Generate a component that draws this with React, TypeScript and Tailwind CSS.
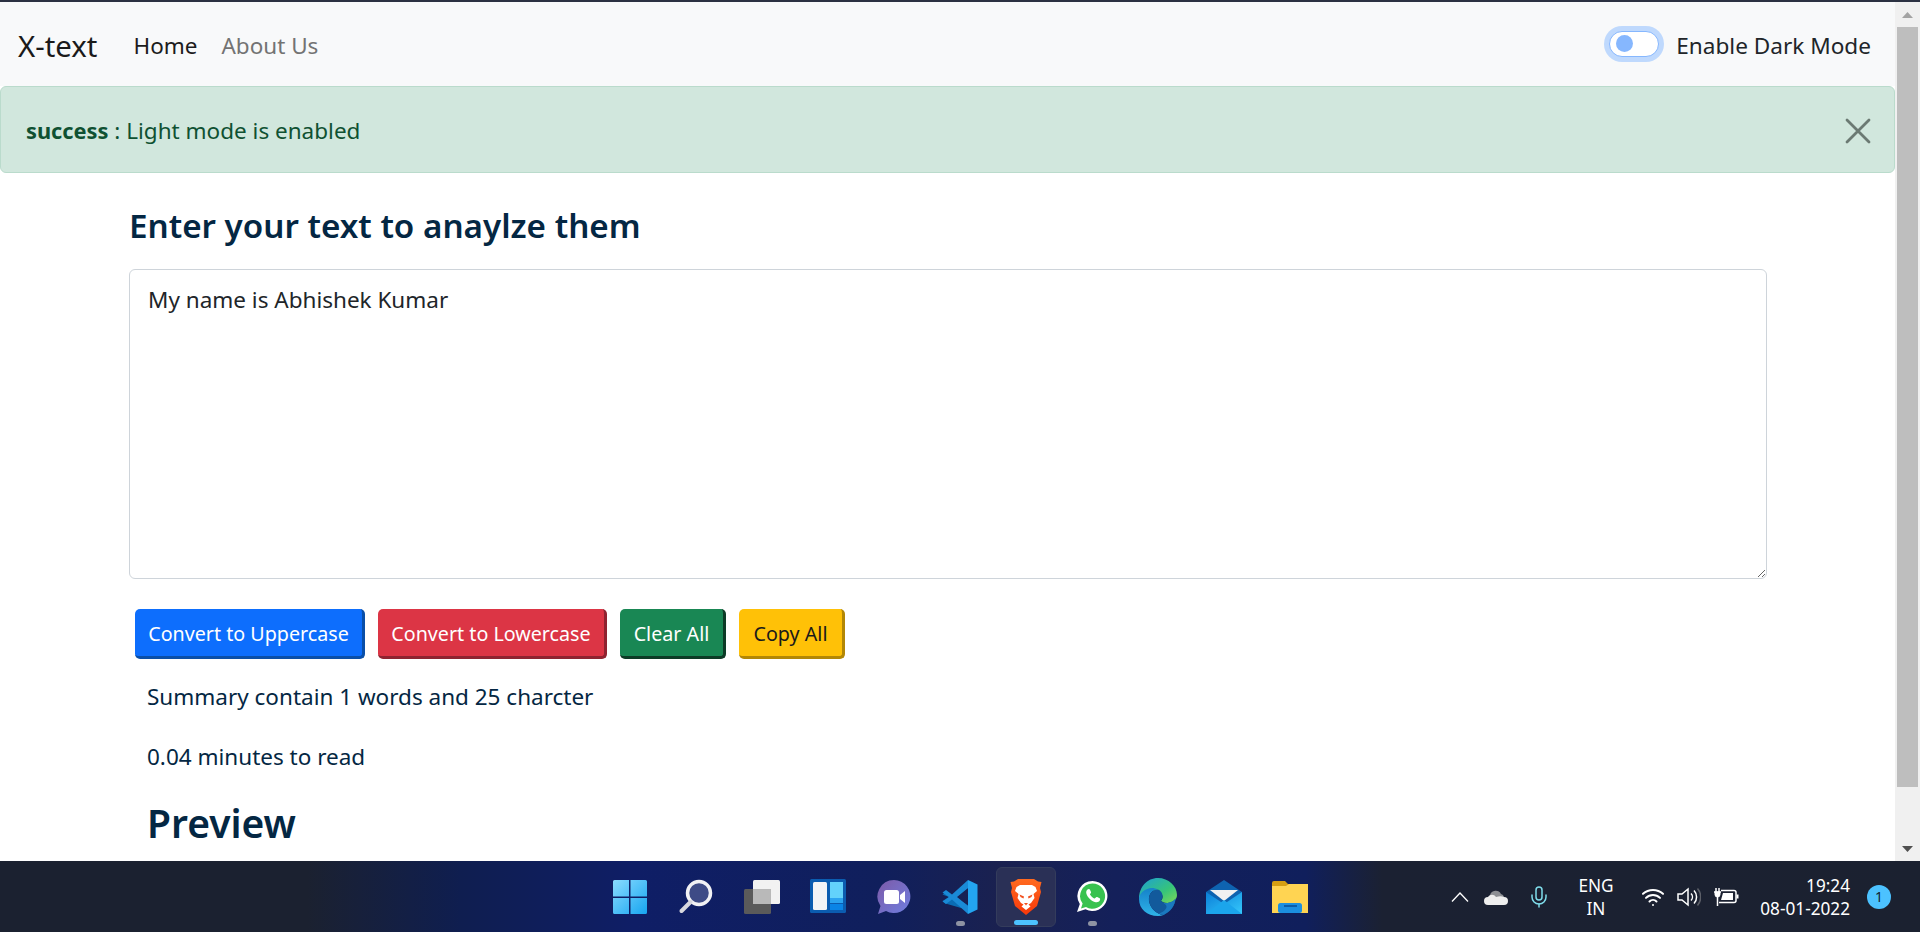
import { Mic, Wifi } from 'lucide-react'

const sans = "font-['Noto_Sans',sans-serif]"

function WindowsIcon() {
  return (
    <svg width="36" height="36" viewBox="0 0 36 36">
      <defs>
        <linearGradient id="win" x1="0" y1="0" x2="1" y2="1">
          <stop offset="0" stopColor="#8adcff" />
          <stop offset="1" stopColor="#17a5f0" />
        </linearGradient>
      </defs>
      <path d="M1 2.500A1.500 1.500 0 0 1 2.500 1H17v16.500H1zM18.500 1H33.500A1.500 1.500 0 0 1 35 2.500V17.500H18.500zM1 19H17V35H2.500A1.500 1.500 0 0 1 1 33.500zM18.500 19H35V33.500A1.500 1.500 0 0 1 33.500 35H18.500z" fill="url(#win)" />
    </svg>
  )
}

function SearchIcon() {
  return (
    <svg width="36" height="36" viewBox="0 0 36 36">
      <circle cx="21" cy="14" r="11.500" fill="#3e4b86" stroke="#f1f1f4" strokeWidth="3.500" />
      <path d="M12.500 23 3.500 32" stroke="#d8d8de" strokeWidth="4" strokeLinecap="round" />
    </svg>
  )
}

function TaskViewIcon() {
  return (
    <svg width="36" height="36" viewBox="0 0 36 36">
      <rect x="9" y="1" width="27" height="24" rx="1.500" fill="#f2f2f2" />
      <rect x="0" y="10" width="27" height="25" rx="1.500" fill="#5a5a5a" />
      <path d="M9 10h18v15H9z" fill="#b9b9b9" />
    </svg>
  )
}

function WidgetsIcon() {
  return (
    <svg width="36" height="36" viewBox="0 0 36 36">
      <rect width="36" height="34" rx="1.500" fill="#0b5cb0" />
      <rect x="3" y="3" width="14" height="28" rx="1.500" fill="#f3f4f6" />
      <path d="M20 3h13v16H20z" fill="#63d2fb" />
      <path d="M20 19h13v5H20z" fill="#2ba3f0" />
      <path d="M20 25h13v6H20z" fill="#0a84e6" />
    </svg>
  )
}

function TeamsIcon() {
  return (
    <svg width="34" height="36" viewBox="0 0 34 36">
      <defs>
        <linearGradient id="teams" x1="0" y1="0" x2="1" y2="1">
          <stop offset="0" stopColor="#7d5aa8" />
          <stop offset="1" stopColor="#6f7fe0" />
        </linearGradient>
      </defs>
      <path d="M17 1a16.500 16.500 0 1 1-8 31l-8 3 2.500-8A16.500 16.500 0 0 1 17 1z" fill="url(#teams)" />
      <rect x="7" y="11" width="15" height="14" rx="2.500" fill="#fff" />
      <path d="m23 16 5-4v12l-5-4z" fill="#fff" />
    </svg>
  )
}

function CodeIcon() {
  return (
    <svg width="36" height="36" viewBox="0 0 36 36">
      <path d="M26 5 10 18 3.500 13 .5 15.500 7 18 .5 22 3.500 24.500 26 31l1-4L13 18l13-9z" fill="#0a6cb4" />
      <path d="M26 1 10 15.500 4 11 .5 13.500 7 18 .5 22.500 4 25 10 20.500 26 35V27L15 18 26 9z" fill="#1a8ad6" />
      <path d="M26 1 35.500 5.500V30.500L26 35z" fill="#23a5f0" />
    </svg>
  )
}

function BraveIcon() {
  return (
    <svg width="32" height="36" viewBox="0 0 32 36">
      <defs>
        <linearGradient id="brave" x1="0" y1="0" x2="0" y2="1">
          <stop offset="0" stopColor="#ff6a1f" />
          <stop offset="1" stopColor="#f8380a" />
        </linearGradient>
      </defs>
      <path d="M8 0H24L28 2.500 31.500 3 30 9 31 13 27 27 16 36 5 27 1 13 2 9 .5 3 4 2.500z" fill="url(#brave)" />
      <path d="M10 6H22L25.500 8 27 12 23.500 15 24.500 19 21 24 18.500 25.500 20.500 27.500 16 31 11.500 27.500 13.500 25.500 11 24 7.500 19 8.500 15 5 12 6.500 8z" fill="#fff" />
      <path d="M9.500 15.500 14 17.500 13.500 19.500 10.500 18zM22.500 15.500 18 17.500 18.500 19.500 21.500 18z" fill="#f2501e" />
      <path d="M14 24H18L16 26.500z" fill="#f2501e" />
    </svg>
  )
}

function WhatsAppIcon() {
  return (
    <svg width="32" height="34" viewBox="0 0 32 34">
      <path d="M16.500 1a15 15 0 1 1-7 28.300L1 32l2.800-8A15 15 0 0 1 16.500 1z" fill="#fff" />
      <path d="M16.500 3.500a12.600 12.600 0 1 1-6.500 23.400l-5 1.500 1.600-4.800A12.600 12.600 0 0 1 16.500 3.500z" fill="#38c24f" />
      <path d="M11.500 9.500c1-.9 2-.8 2.500.2l1 2.300c.2.600 0 1-.7 1.800-.4.400-.4.700 0 1.300 1 1.500 2.300 2.600 3.800 3.300.5.200.8.100 1.200-.3.900-1 1.200-1.300 1.900-1l2.400 1.200c.7.400.7 1.200.2 2.300-.7 1.300-2.400 2-4.100 1.600-4.500-1-8.500-5-9.400-8.900-.3-1.600.1-2.800 1.200-3.800z" fill="#fff" />
    </svg>
  )
}

function EdgeIcon() {
  return (
    <svg width="38" height="38" viewBox="0 0 38 38">
      <defs>
        <linearGradient id="edgeTop" x1="0" y1="0" x2="1" y2="1">
          <stop offset="0" stopColor="#1d9fd8" />
          <stop offset=".6" stopColor="#36c47a" />
          <stop offset="1" stopColor="#7ed957" />
        </linearGradient>
        <linearGradient id="edgeSide" x1="0" y1="0" x2="0" y2="1">
          <stop offset="0" stopColor="#1581c9" />
          <stop offset="1" stopColor="#2fb4e8" />
        </linearGradient>
      </defs>
      <path d="M19 0C29.500 0 38 8 38 17c0 5-4.500 8-9.500 8-4 0-6-1.500-6.500-2.500 3-2.500 2-8-3.500-9.500C11 11 3 15 0 21 0 9 8 0 19 0z" fill="url(#edgeTop)" />
      <path d="M0 21c0-6 6.500-11 13-11 2 0 4 .5 5.500 1.500C12 12 8.500 18 10.500 25c1.500 5.500 7 11 14 12-1.800.7-3.500 1-5.500 1C8 38 0 31 0 21z" fill="url(#edgeSide)" />
      <path d="M18.500 11.500c5 1 6.500 7.500 3.500 11 1 2 4 3 7 2.500 3-.3 6-2 7.500-4.500-.5 7.500-5 13-12 16.500-7-1-12.500-6.500-14-12-2-7 1.500-13 8-13.500z" fill="#125a9c" />
      <path d="M22 22.500c1 2 3.500 3 6.500 2.500 4-.5 7-2.500 8-4.500-.5 7.500-5 13-12 16.500-1.500-.3-3-.8-4.500-1.600C25 34 29 30 27 27c-1.500-1.500-3.500-2.500-5-4.500z" fill="#1a79bf" />
    </svg>
  )
}

function MailIcon() {
  return (
    <svg width="36" height="34" viewBox="0 0 36 34">
      <defs>
        <linearGradient id="mail" x1="0" y1="0" x2="1" y2="1">
          <stop offset="0" stopColor="#0a7fd8" />
          <stop offset="1" stopColor="#36c8fb" />
        </linearGradient>
      </defs>
      <path d="M18 0 36 12v22H0V12z" fill="#0e63b0" />
      <path d="M4 10h28l-14 11z" fill="#f1f1f1" />
      <path d="M0 12 18 24 36 12v22H0z" fill="url(#mail)" />
      <path d="M0 34 18 20l18 14z" fill="#1ba5ec" />
    </svg>
  )
}

function FolderIcon() {
  return (
    <svg width="36" height="32" viewBox="0 0 36 32">
      <path d="M0 2a2 2 0 0 1 2-2h11l3 3h20v5H0z" fill="#d69f12" />
      <path d="M0 5h14l3-2h19v29H0z" fill="#ffd452" />
      <rect x="6" y="22" width="24" height="10" rx="2.500" fill="#1b8fe0" />
      <rect x="12" y="24" width="13" height="2" fill="#0b5da8" />
    </svg>
  )
}

function SpeakerIcon() {
  return (
    <svg width="24" height="20" viewBox="0 0 24 20" fill="none" stroke="#fff" strokeWidth="1.500">
      <path d="M1 7v6h4l6 5V2L5 7z" />
      <path d="M14 6.500a5 5 0 0 1 0 7" />
      <path d="M17 3.500a9.500 9.500 0 0 1 0 13" />
      <path d="M20.500 1.500a13 13 0 0 1 0 17" stroke="#5c5f68" />
    </svg>
  )
}

function BatteryIcon() {
  return (
    <svg width="26" height="20" viewBox="0 0 26 20" fill="none" stroke="#fff">
      <path d="M1 5h7M3 1V5M6 1V5M4.500 9v10" strokeWidth="1.500" />
      <path d="M2 5h5v2.500a2.500 2.500 0 0 1-5 0z" fill="#fff" />
      <path d="M8 3.500h13a2 2 0 0 1 2 2v8a2 2 0 0 1-2 2H6" strokeWidth="1.500" />
      <path d="M10 6h10v7H8z" fill="#fff" strokeWidth="0" />
      <path d="M23.500 7.500h2v4h-2z" fill="#fff" strokeWidth="0" />
    </svg>
  )
}

function Dock({ children, active, dot }: { children: React.ReactNode; active?: boolean; dot?: boolean }) {
  return (
    <div className={`relative mx-[3px] flex h-[60px] w-[60px] items-center justify-center rounded-md ${active ? 'border border-[#343c5c] bg-[#2a3056]' : ''}`}>
      {children}
      {dot && <div className="absolute bottom-[1px] h-[5px] w-[9px] rounded-full bg-[#8e93a3]" />}
      {active && <div className="absolute bottom-[1px] h-[5px] w-[24px] rounded-full bg-[#4cc2ff]" />}
    </div>
  )
}

export default function App() {
  return (
    <div className={`flex h-[932px] w-[1920px] flex-col overflow-hidden bg-white ${sans}`}>
      <div className="h-[2px] bg-[#2b3142]" />
      <div className="flex h-[859px] min-h-0">
        <div className="w-[1895px] min-w-0">
          {/* Navbar */}
          <nav className="flex h-[84px] items-center bg-[#f8f9fa] pl-[18px] pr-[24px] pt-[4px]">
            <a className="text-[29.400px] text-[#1a1a1a]">X-text</a>
            <a className="ml-[36px] text-[22.500px] text-[#1c1c1c]">Home</a>
            <a className="ml-[24px] text-[22.500px] text-[#737373]">About Us</a>
            <div className="ml-auto flex items-center">
              <div className="mb-[4px] flex h-[26px] w-[50px] items-center rounded-full border border-[#86b7fe] bg-white pl-[6px] shadow-[0_0_0_5px_#bfd9fd]">
                <div className="h-[17px] w-[17px] rounded-full bg-[#86b7fe]" />
              </div>
              <span className="ml-[17px] text-[22.600px] text-[#212529]">Enable Dark Mode</span>
            </div>
          </nav>

          {/* Alert */}
          <div className="flex h-[87px] items-center rounded-md border border-[#badbcc] bg-[#d1e7dd] pl-[25px] pr-[23px] pt-[2px] text-[22.500px] text-[#0f5132]">
            <span><strong className="text-[21.800px] font-bold">success</strong> : Light mode is enabled</span>
            <svg className="ml-auto" width="26" height="26" viewBox="0 0 26 26" stroke="#6b7a73" strokeWidth="2.800" strokeLinecap="round">
              <path d="M2 2 24 24M24 2 2 24" />
            </svg>
          </div>

          {/* Form */}
          <div className="pl-[129px] pr-[128px] text-[#042743]">
            <h3 className="mt-[32px] text-[33.200px] font-[560] leading-[42px]">Enter your text to anaylze them</h3>
            <textarea
              className="mt-[22px] block h-[310px] w-full rounded-md border border-[#ced4da] bg-white px-[18px] py-[14px] text-[22.500px] leading-[32px] text-[#212529]"
              defaultValue="My name is Abhishek Kumar"
            />
            <div className="mt-[30px] flex gap-[13px] pl-[6px] text-[19.700px]">
              <button className="h-[50px] w-[230px] rounded-[5px] border-r-[3px] border-b-[3px] border-[#0a4fa8] bg-[#0d6efd] pt-[3px] text-white">Convert to Uppercase</button>
              <button className="h-[50px] w-[229px] rounded-[5px] border-r-[3px] border-b-[3px] border-[#8f2330] bg-[#dc3545] pt-[3px] text-white">Convert to Lowercase</button>
              <button className="h-[50px] w-[106px] rounded-[5px] border-r-[3px] border-b-[3px] border-[#0c3b26] bg-[#198754] pt-[3px] text-white">Clear All</button>
              <button className="h-[50px] w-[106px] rounded-[5px] border-r-[3px] border-b-[3px] border-[#b38705] bg-[#ffc107] pt-[3px] text-[#1a1a1a]">Copy All</button>
            </div>
            <div className="pl-[18px]">
              <p className="mt-[23px] text-[22.500px] leading-[30px]">Summary contain 1 words and 25 charcter</p>
              <p className="mt-[30px] text-[22.500px] leading-[30px]">0.04 minutes to read</p>
              <h2 className="mt-[27px] text-[39px] font-[560] leading-[48px]">Preview</h2>
            </div>
          </div>
        </div>

        {/* Scrollbar */}
        <div className="flex w-[25px] flex-col items-center bg-[#f0f0f0]">
          <svg className="mt-[10px]" width="11" height="6" viewBox="0 0 11 6"><path d="M5.500 0 11 6H0z" fill="#a3a3a3" /></svg>
          <div className="mt-[9px] h-[760px] w-[21px] bg-[#bebebe]" />
          <svg className="mt-[59px]" width="11" height="6" viewBox="0 0 11 6"><path d="M5.500 6 11 0H0z" fill="#505050" /></svg>
        </div>
      </div>

      {/* Taskbar */}
      <div className="flex h-[71px] items-center bg-[linear-gradient(to_right,#1b2130_0%,#1b2130_16%,#0f1e50_24%,#0f1e66_33%,#101f5c_46%,#1a2150_52%,#14205a_58%,#101f5c_68%,#1b2132_72%,#1b2130_100%)] pl-[597px]">
        <Dock><WindowsIcon /></Dock>
        <Dock><SearchIcon /></Dock>
        <Dock><TaskViewIcon /></Dock>
        <Dock><WidgetsIcon /></Dock>
        <Dock><TeamsIcon /></Dock>
        <Dock dot><CodeIcon /></Dock>
        <Dock active><BraveIcon /></Dock>
        <Dock dot><WhatsAppIcon /></Dock>
        <Dock><EdgeIcon /></Dock>
        <Dock><MailIcon /></Dock>
        <Dock><FolderIcon /></Dock>

        <div className="ml-[128px] flex items-center text-white">
          <svg width="18" height="10" viewBox="0 0 18 10" fill="none" stroke="#fff" strokeWidth="1.300"><path d="M1 9.500 9 1l8 8.500" /></svg>
          <svg className="ml-[15px]" width="24" height="16" viewBox="0 0 24 16">
            <path d="M6 6a6 6 0 0 1 11-1 4 4 0 0 1 3 3H6z" fill="#8d8f94" />
            <path d="M4 16a4 4 0 0 1 0-8c2-3 6-3 8 0 3-1 6-1 8 0a4 4 0 0 1 0 8z" fill="#eeeeee" />
          </svg>
          <Mic className="ml-[19px]" size={24} color="#7fdcea" strokeWidth={1.500} />
          <div className="ml-[23px] w-[44px] text-center text-[17.200px] leading-[23px]">
            <div>ENG</div>
            <div>IN</div>
          </div>
          <Wifi className="ml-[23px]" size={24} color="#fff" strokeWidth={2} />
          <div className="ml-[12px]"><SpeakerIcon /></div>
          <div className="ml-[12px]"><BatteryIcon /></div>
          <div className="ml-[17px] w-[94px] whitespace-nowrap text-right text-[17.200px] leading-[23px]">
            <div>19:24</div>
            <div>08-01-2022</div>
          </div>
          <div className="ml-[17px] flex h-[24px] w-[24px] items-center justify-center rounded-full bg-[#4cc2ff] text-[14px] text-[#10202e]">1</div>
        </div>
      </div>
    </div>
  )
}
